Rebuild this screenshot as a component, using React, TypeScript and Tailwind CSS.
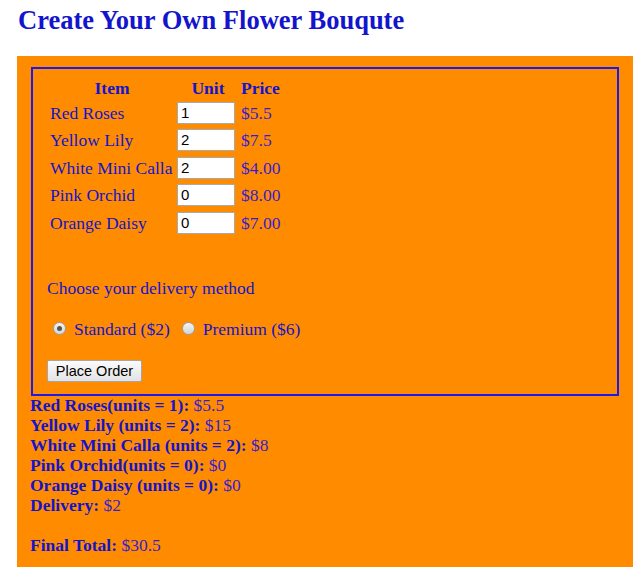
import React from "react";

const flowers = [
  { name: "Red Roses", units: "1", price: "$5.5" },
  { name: "Yellow Lily", units: "2", price: "$7.5" },
  { name: "White Mini Calla", units: "2", price: "$4.00" },
  { name: "Pink Orchid", units: "0", price: "$8.00" },
  { name: "Orange Daisy", units: "0", price: "$7.00" },
];

const summary = [
  { label: "Red Roses(units = 1):", value: "$5.5" },
  { label: "Yellow Lily (units = 2):", value: "$15" },
  { label: "White Mini Calla (units = 2):", value: "$8" },
  { label: "Pink Orchid(units = 0):", value: "$0" },
  { label: "Orange Daisy (units = 0):", value: "$0" },
  { label: "Delivery:", value: "$2" },
];

const Radio = ({ checked }: { checked?: boolean }) => (
  <span className="inline-flex h-[13px] w-[13px] items-center justify-center rounded-full border border-[#a0a0a0] bg-gradient-to-b from-[#f4f4f4] to-[#d4d4d4]">
    {checked && <span className="h-[5px] w-[5px] rounded-full bg-[#555]" />}
  </span>
);

export default function App() {
  return (
    <div className="min-h-screen bg-white font-['Liberation_Serif',serif] text-[#1414cc]">
      <h1 className="h-[56px] pl-[18px] pt-[4px] text-[26.5px] font-bold leading-[32px]">
        Create Your Own Flower Bouqute
      </h1>

      <div className="ml-[17px] w-[616px] bg-[#ff8c00] px-[14px] pb-[12px] pt-[11px]">
        {/* Order form */}
        <div className="h-[329px] border-2 border-[#1a1aee] pl-[14px] pt-[8px] text-[17.5px]">
          <div className="grid grid-cols-[130px_62px_auto] items-center">
            <div className="h-[22px] text-center font-bold leading-[22px]">Item</div>
            <div className="h-[22px] text-center font-bold leading-[22px]">Unit</div>
            <div className="h-[22px] pl-[2px] font-bold leading-[22px]">Price</div>
            {flowers.map((f) => (
              <React.Fragment key={f.name}>
                <div className="flex h-[27.5px] items-center pl-[3px] whitespace-nowrap">
                  {f.name}
                </div>
                <div className="flex h-[27.5px] items-center">
                  <input
                    type="text"
                    defaultValue={f.units}
                    className="h-[22px] w-[58px] border border-[#a9a9a9] bg-white pl-[3px] font-['Liberation_Sans',sans-serif] text-[15px] text-black outline-none"
                  />
                </div>
                <div className="flex h-[27.5px] items-center pl-[2px] text-[#3a1ccf]">
                  {f.price}
                </div>
              </React.Fragment>
            ))}
          </div>

          <p className="mt-[41px] h-[20px] leading-[20px]">Choose your delivery method</p>

          <div className="mt-[21px] flex h-[20px] items-center pl-[6px] leading-[20px]">
            <Radio checked />
            <span className="ml-[8px]">Standard ($2)</span>
            <span className="ml-[12px]">
              <Radio />
            </span>
            <span className="ml-[8px]">Premium ($6)</span>
          </div>

          <button className="mt-[21px] h-[22px] w-[95px] rounded-[2px] border border-[#a6a6a6] bg-gradient-to-b from-[#fbfbfb] to-[#e3e3e3] font-['Liberation_Sans',sans-serif] text-[14.5px] text-black">
            Place Order
          </button>
        </div>

        {/* Summary */}
        <div className="-ml-[1px] -mt-[1px] text-[17.5px] leading-[20px]">
          {summary.map((s) => (
            <div key={s.label}>
              <span className="font-bold">{s.label}</span>{" "}
              <span className="text-[#3a1ccf]">{s.value}</span>
            </div>
          ))}
          <div className="h-[20px]" />
          <div>
            <span className="font-bold">Final Total:</span>{" "}
            <span className="text-[#3a1ccf]">$30.5</span>
          </div>
        </div>
      </div>
    </div>
  );
}
